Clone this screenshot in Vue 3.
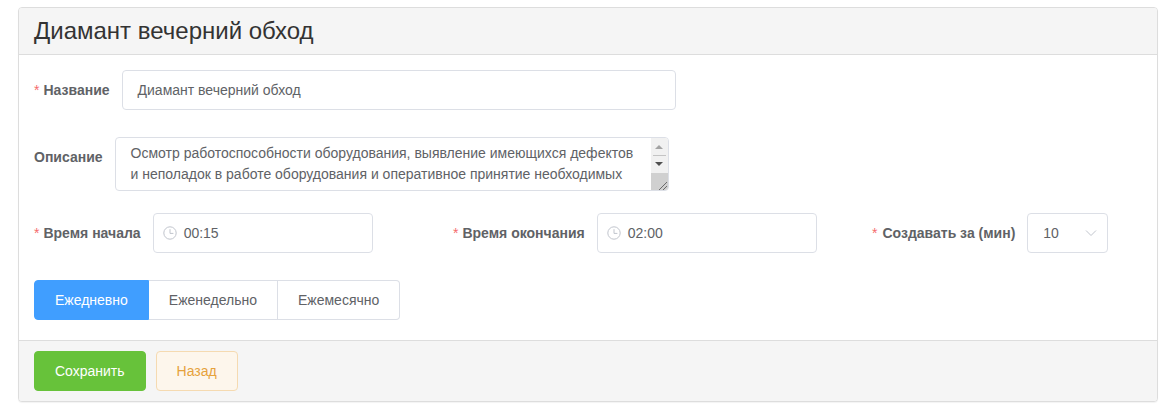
<template>
  <div class="page">
    <section class="card">
      <header class="card-head">
        <h1>Диамант вечерний обход</h1>
      </header>

      <div class="card-body">
        <div class="field name-row">
          <label class="required">Название</label>
          <div class="control name-input">Диамант вечерний обход</div>
        </div>

        <div class="field desc-row">
          <label>Описание</label>
          <div class="textarea">
            <div class="textarea-text">{{ description }}</div>
            <div class="scrollbar">
              <span class="arrow up"></span>
              <span class="arrow-line"></span>
              <span class="arrow down"></span>
              <span class="thumb">
                <svg width="10" height="10" viewBox="0 0 10 10">
                  <path d="M1 10 L9 2 M5 10 L9 6" stroke="#6b6b6b" stroke-width="1" fill="none" />
                </svg>
              </span>
            </div>
          </div>
        </div>

        <div class="time-row">
          <div v-for="item in times" :key="item.label" class="field">
            <label class="required">{{ item.label }}</label>
            <div class="control time-input">
              <svg class="clock" width="14" height="14" viewBox="0 0 14 14">
                <circle cx="7" cy="7" r="6.2" fill="none" stroke="#c0c4cc" stroke-width="1" />
                <path d="M7 3.2 V7.4 H10.4" fill="none" stroke="#c0c4cc" stroke-width="1" />
              </svg>
              <span>{{ item.value }}</span>
            </div>
          </div>
          <div class="field">
            <label class="required wide-mark">Создавать за (мин)</label>
            <div class="control select-input">
              <span>10</span>
              <svg width="12" height="8" viewBox="0 0 12 8">
                <path d="M1 1.5 L6 6.5 L11 1.5" fill="none" stroke="#c0c4cc" stroke-width="1" />
              </svg>
            </div>
          </div>
        </div>

        <div class="tabs">
          <button
            v-for="tab in tabs"
            :key="tab"
            class="tab"
            :class="{ active: tab === activeTab }"
            type="button"
            @click="activeTab = tab"
          >
            {{ tab }}
          </button>
        </div>
      </div>

      <footer class="card-foot">
        <button class="btn save" type="button">Сохранить</button>
        <button class="btn back" type="button">Назад</button>
      </footer>
    </section>
  </div>
</template>

<script setup>
import { ref } from 'vue'

const description =
  'Осмотр работоспособности оборудования, выявление имеющихся дефектов и неполадок в работе оборудования и оперативное принятие необходимых'

const times = [
  { label: 'Время начала', value: '00:15' },
  { label: 'Время окончания', value: '02:00' }
]

const tabs = ['Ежедневно', 'Еженедельно', 'Ежемесячно']
const activeTab = ref('Ежедневно')
</script>

<style>
body {
  background: #fff;
}
</style>

<style scoped>
.page {
  padding: 7px 10px 8px 18px;
  font-family: "Liberation Sans", Arial, sans-serif;
  font-size: 14px;
  color: #606266;
}

.card {
  border: 1px solid #ddd;
  border-radius: 4px;
  box-shadow: 0 1px 1px rgba(0, 0, 0, 0.05);
  background: #fff;
  overflow: hidden;
}

.card-head {
  height: 46px;
  display: flex;
  align-items: center;
  padding: 0 15px;
  background: #f5f5f5;
  border-bottom: 1px solid #ddd;
}

.card-head h1 {
  margin: 0;
  font-size: 24px;
  font-weight: 400;
  color: #333;
}

.card-body {
  display: flex;
  flex-direction: column;
  align-items: flex-start;
  padding: 15px 15px 20px;
}

.field {
  display: flex;
  align-items: center;
}

.field label {
  padding-right: 12px;
  font-weight: 700;
  white-space: nowrap;
}

.field label.required::before {
  content: "*";
  margin-right: 4px;
  font-weight: 400;
  color: #f56c6c;
}

.field label.wide-mark::before {
  margin-right: 5px;
}

.control {
  box-sizing: border-box;
  height: 40px;
  display: flex;
  align-items: center;
  border: 1px solid #dcdfe6;
  border-radius: 4px;
  background: #fff;
}

.name-input {
  width: 554px;
  padding: 0 15px;
}

.desc-row {
  align-items: flex-start;
  margin-top: 27px;
}

.desc-row label {
  padding-top: 12px;
  line-height: 16px;
}

.textarea {
  box-sizing: border-box;
  width: 554px;
  height: 54px;
  display: flex;
  border: 1px solid #dcdfe6;
  border-radius: 4px;
  overflow: hidden;
}

.textarea-text {
  flex: 1;
  padding: 5px 15px;
  line-height: 21px;
  overflow: hidden;
}

.scrollbar {
  flex: 0 0 17px;
  display: flex;
  flex-direction: column;
  align-items: center;
  background: #f1f1f1;
}

.arrow {
  width: 0;
  height: 0;
  border-left: 4px solid transparent;
  border-right: 4px solid transparent;
}

.arrow.up {
  margin-top: 7px;
  border-bottom: 4px solid #a3a3a3;
}

.arrow-line {
  width: 13px;
  height: 1px;
  margin-top: 6px;
  background: #c4c4c4;
}

.arrow.down {
  margin-top: 6px;
  border-top: 4px solid #505050;
}

.thumb {
  margin-top: auto;
  width: 17px;
  height: 17px;
  display: flex;
  align-items: flex-end;
  justify-content: flex-end;
  background: #d0d0d0;
}

.time-row {
  display: grid;
  grid-template-columns: 419px 419px auto;
  margin-top: 22px;
}

.time-input {
  width: 220px;
  padding: 0 9px;
  gap: 7px;
}

.clock {
  flex: none;
}

.select-input {
  width: 81px;
  padding: 0 10px 0 15px;
  justify-content: space-between;
}

.tabs {
  display: flex;
  margin-top: 27px;
}

.tab {
  box-sizing: border-box;
  height: 40px;
  padding: 0 20px;
  border: 1px solid #dcdfe6;
  border-left: 0;
  background: #fff;
  color: #606266;
  font: inherit;
}

.tab:first-child {
  border-left: 1px solid #dcdfe6;
  border-radius: 4px 0 0 4px;
}

.tab:last-child {
  border-radius: 0 4px 4px 0;
}

.tab.active {
  background: #409eff;
  border-color: #409eff;
  color: #fff;
}

.card-foot {
  display: flex;
  gap: 10px;
  padding: 10px 15px;
  background: #f5f5f5;
  border-top: 1px solid #ddd;
}

.btn {
  box-sizing: border-box;
  height: 40px;
  padding: 0 20px;
  border-radius: 4px;
  border: 1px solid;
  font: inherit;
}

.save {
  background: #67c23a;
  border-color: #67c23a;
  color: #fff;
}

.back {
  background: #fdf6ec;
  border-color: #f5dab1;
  color: #e6a23c;
}
</style>
